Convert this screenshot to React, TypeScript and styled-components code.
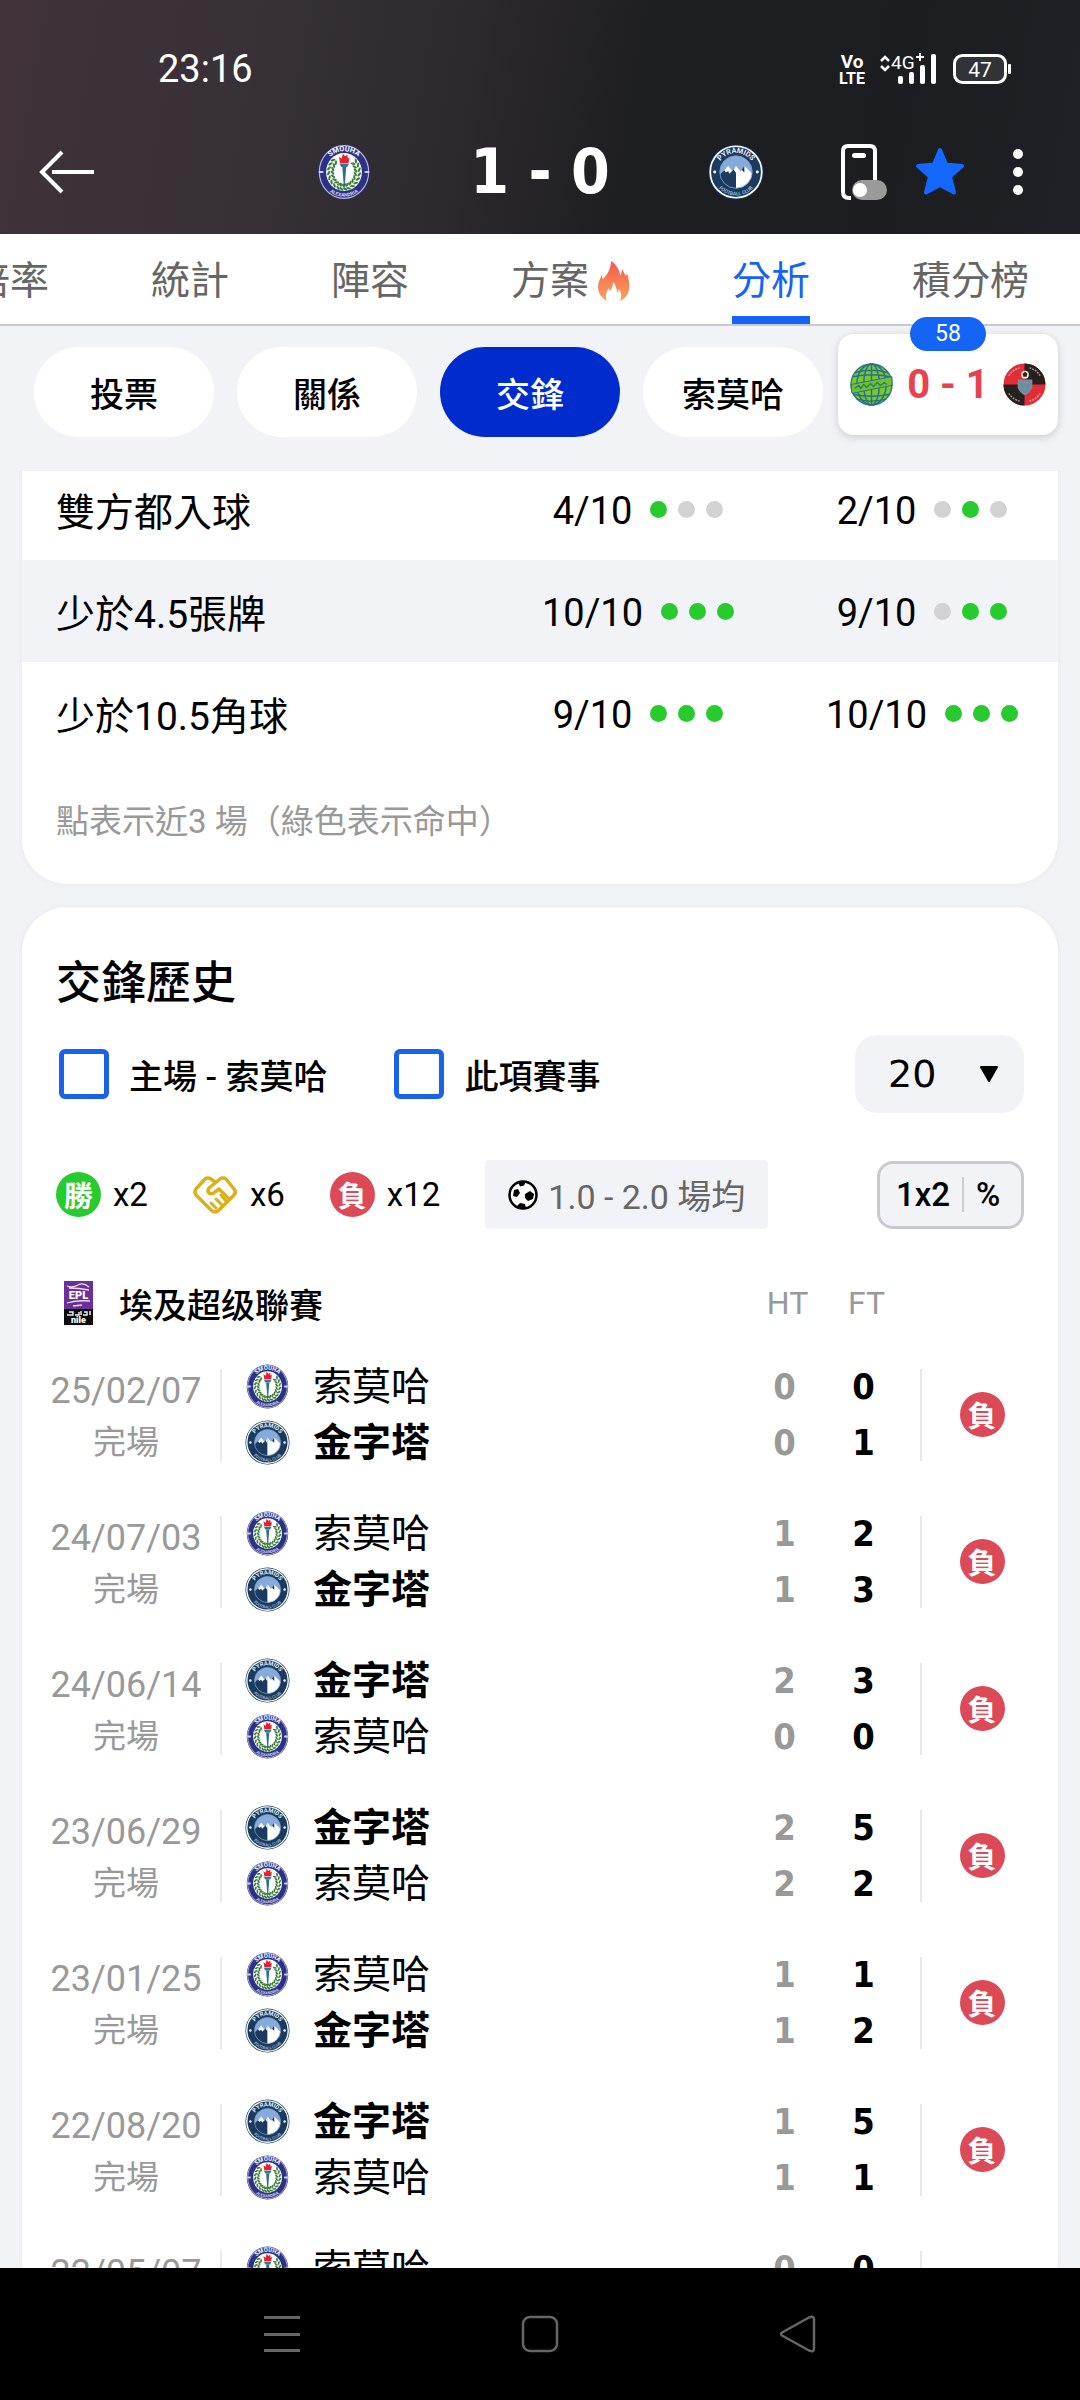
import React, { useId, useLayoutEffect, useRef } from 'react';
import styled, { createGlobalStyle } from 'styled-components';

const c = {
  page: '#f2f3f7',
  blue: '#1464f6',
  active: '#002ccd',
  green: '#28cb2d',
  gold: '#d9b11c',
  red: '#dc4957',
  muted: '#999999',
  text: '#000000',
  line: '#e8e8ea',
};

const GlobalStyle = createGlobalStyle`
  *, *::before, *::after { box-sizing: border-box; }
  body { margin: 0; background: ${c.page}; }
  button, input, select { font: inherit; color: inherit; margin: 0; }
  button { border: 0; padding: 0; background: none; cursor: pointer; }
  svg { display: block; flex: none; overflow: visible; }
`;

const Screen = styled.div`
  position: relative;
  display: flex;
  flex-direction: column;
  height: 100vh;
  overflow: hidden;
  background: ${c.page};
  color: ${c.text};
  font-family: Roboto, 'Noto Sans CJK TC', sans-serif;
`;

/* ---------- top ---------- */
const Header = styled.header`
  flex: none;
  color: #fff;
  padding-bottom: 28px;
  background: linear-gradient(100deg, #41313a 0%, #373137 24%, #2c282d 44%, #1e1f22 58%, #1c1d20 82%, #202127 100%);
`;
const StatusBar = styled.div`
  display: flex;
  align-items: center;
  justify-content: space-between;
  height: 138px;
  padding: 0 69px 0 158px;
`;
const Clock = styled.time`
  font-size: 38px;
  line-height: 48px;
`;
const StatusIcons = styled.div`
  display: flex;
  align-items: center;
  gap: 16px;
`;
const MatchBar = styled.div`
  display: grid;
  grid-template-columns: 1fr 448px 1fr;
  align-items: center;
  height: 68px;
  padding: 0 37px;
`;
const IconButton = styled.button`
  display: flex;
  align-items: center;
  justify-content: center;
  justify-self: start;
`;
const Scoreline = styled.div`
  display: flex;
  align-items: center;
  justify-content: space-between;
`;
const BigScore = styled.strong`
  font-family: 'DejaVu Sans Condensed', 'DejaVu Sans', sans-serif;
  font-size: 62px;
  line-height: 68px;
  font-weight: 700;
`;
const Actions = styled.div`
  display: flex;
  align-items: center;
  justify-content: flex-end;
  gap: 28px;
`;
const MenuButton = styled(IconButton)`
  width: 50px;
  height: 56px;
`;

/* ---------- tabs ---------- */
const Tabs = styled.nav`
  flex: none;
  display: flex;
  justify-content: flex-end;
  gap: 102px;
  height: 92px;
  padding-right: 51px;
  overflow: hidden;
  background: #fff;
  border-bottom: 2px solid #c9cacd;
`;
const Tab = styled.a<{ $active?: boolean }>`
  flex: none;
  display: flex;
  align-items: center;
  gap: 9px;
  padding-top: 12px;
  border-bottom: 8px solid ${(p) => (p.$active ? c.blue : 'transparent')};
  color: ${(p) => (p.$active ? c.blue : '#666')};
  font-size: 39px;
  line-height: 56px;
  text-decoration: none;
  white-space: nowrap;
`;
const Pills = styled.div`
  flex: none;
  display: flex;
  gap: 23px;
  padding: 21px 34px 34px;
`;
const Pill = styled.button<{ $active?: boolean }>`
  flex: none;
  width: 180px;
  height: 90px;
  border-radius: 45px;
  background: ${(p) => (p.$active ? c.active : '#fff')};
  color: ${(p) => (p.$active ? '#fff' : c.text)};
  font-size: 34px;
  font-weight: 500;
`;

/* ---------- floating live match ---------- */
const LiveCard = styled.aside`
  position: absolute;
  top: 334px;
  right: 22px;
  width: 220px;
  height: 101px;
  display: flex;
  align-items: center;
  justify-content: space-between;
  padding: 0 12px;
  border-radius: 16px;
  background: #fff;
  box-shadow: 0 2px 8px rgba(0, 0, 0, 0.16);
`;
const LiveMinute = styled.span`
  position: absolute;
  top: -17px;
  left: 72px;
  width: 76px;
  height: 34px;
  border-radius: 17px;
  background: ${c.blue};
  color: #fff;
  font-size: 23px;
  line-height: 34px;
  text-align: center;
`;
const LiveScore = styled.strong`
  color: #e8424e;
  font-size: 40px;
  line-height: 48px;
`;

/* ---------- content ---------- */
const Content = styled.main`
  flex: 1;
  min-height: 0;
  overflow-y: auto;
  scrollbar-width: none;
  padding: 0 22px;
`;
const Card = styled.section`
  background: #fff;
  border-radius: 45px;
  box-shadow: 0 0 6px rgba(0, 0, 0, 0.05);
  overflow: hidden;
  & + & {
    margin-top: 23px;
  }
`;
const StatsCard = styled(Card)`
  border-radius: 0 0 45px 45px;
`;
const StatsTable = styled.table`
  width: 100%;
  table-layout: fixed;
  border-collapse: collapse;
  tr:nth-child(even) {
    background: ${c.page};
  }
`;
const StatLabel = styled.th`
  height: 102px;
  padding: 0 0 0 34px;
  text-align: left;
  font-size: 39px;
  font-weight: 400;
`;
const StatValue = styled.td<{ $width: number }>`
  width: ${(p) => p.$width}px;
  padding: 0;
`;
const StatInner = styled.div`
  display: flex;
  align-items: center;
  justify-content: center;
  gap: 18px;
`;
const Rate = styled.span`
  padding-top: 4px;
  font-size: 38px;
  line-height: 48px;
`;
const Dots = styled.span`
  display: flex;
  gap: 11px;
`;
const Dot = styled.i<{ $hit: boolean }>`
  width: 17px;
  height: 17px;
  border-radius: 50%;
  background: ${(p) => (p.$hit ? c.green : '#d2d2d4')};
`;
const Note = styled.p`
  margin: 0;
  padding: 34px 34px 38px;
  color: ${c.muted};
  font-size: 33px;
  line-height: 48px;
`;

const Title = styled.h2`
  margin: 0;
  padding: 47px 34px 21px;
  font-size: 45px;
  line-height: 60px;
  font-weight: 500;
`;
const FilterRow = styled.div`
  display: flex;
  align-items: center;
  gap: 67px;
  height: 78px;
  margin: 0 34px 47px 37px;
  font-size: 34px;
  font-weight: 500;
`;
const Check = styled.label`
  display: flex;
  align-items: center;
  gap: 20px;
  input {
    appearance: none;
    width: 50px;
    height: 50px;
    border: 5px solid #1b62ea;
    border-radius: 6px;
    background: #fff;
  }
`;
const Picker = styled.div`
  position: relative;
  margin-left: auto;
  width: 169px;
  select {
    appearance: none;
    width: 100%;
    height: 78px;
    padding: 0 0 0 33px;
    border: 0;
    border-radius: 22px;
    background: ${c.page};
    font-family: 'DejaVu Sans', sans-serif;
    font-size: 38px;
    font-weight: 400;
  }
  svg {
    position: absolute;
    right: 25px;
    top: 30px;
    pointer-events: none;
  }
`;
const Legend = styled.div`
  display: flex;
  align-items: center;
  gap: 45px;
  height: 69px;
  margin: 0 34px 36px;
  font-size: 33px;
`;
const Tally = styled.span`
  display: flex;
  align-items: center;
  gap: 12px;
`;
const Badge = styled.span<{ $color: string }>`
  display: flex;
  align-items: center;
  justify-content: center;
  width: 45px;
  height: 45px;
  border-radius: 50%;
  background: ${(p) => p.$color};
  color: #fff;
  font-family: 'Noto Sans CJK TC', sans-serif;
  font-size: 29px;
  line-height: 45px;
  font-weight: 700;
`;
const Average = styled.span`
  display: flex;
  align-items: center;
  gap: 10px;
  height: 69px;
  padding: 0 23px;
  border-radius: 4px;
  background: ${c.page};
  color: #666;
  font-size: 34px;
  white-space: nowrap;
`;
const Toggle = styled.button`
  display: flex;
  align-items: center;
  gap: 12px;
  width: 147px;
  height: 68px;
  margin-left: auto;
  padding: 0 0 0 16px;
  border: 3px solid #c9cad0;
  border-radius: 16px;
  background: ${c.page};
  font-weight: 500;
`;
const ToggleRule = styled.i`
  width: 2px;
  height: 35px;
  background: #cdced3;
`;

const HistoryTable = styled.table`
  width: 100%;
  table-layout: fixed;
  border-collapse: collapse;
  th,
  td {
    padding: 0;
  }
`;
const Col = styled.col<{ $width?: number }>`
  width: ${(p) => (p.$width ? `${p.$width}px` : 'auto')};
`;
const League = styled.div`
  display: flex;
  align-items: center;
  gap: 26px;
  height: 76px;
  padding-left: 42px;
  font-size: 34px;
  font-weight: 500;
`;
const ScoreHead = styled.th`
  && {
    padding-left: 6px;
  }
  color: ${c.muted};
  font-size: 32px;
  font-weight: 400;
`;
const MatchRow = styled.tr`
  height: 147px;
`;
const DateBox = styled.div`
  display: flex;
  flex-direction: column;
  align-items: center;
  justify-content: center;
  height: 92px;
  padding: 4px 0 0 10px;
  border-right: 2px solid ${c.line};
  color: ${c.muted};
  font-size: 36px;
  line-height: 52px;
`;
const Finished = styled.span`
  font-size: 33px;
`;
const Teams = styled.div`
  padding-left: 23px;
`;
const Team = styled.div<{ $winner: boolean }>`
  display: flex;
  align-items: center;
  gap: 23px;
  height: 56px;
  font-size: 39px;
  line-height: 56px;
  font-weight: ${(p) => (p.$winner ? 700 : 400)};
`;
const Goals = styled.div<{ $muted?: boolean }>`
  color: ${(p) => (p.$muted ? c.muted : c.text)};
  font-family: 'DejaVu Sans Condensed', 'DejaVu Sans', sans-serif;
  font-size: 36px;
  line-height: 56px;
  font-weight: 700;
  text-align: center;
`;
const ResultBox = styled.div`
  display: flex;
  align-items: center;
  justify-content: center;
  height: 92px;
  padding-right: 16px;
  border-left: 2px solid ${c.line};
`;

/* ---------- system navigation ---------- */
const SystemNav = styled.footer`
  flex: none;
  display: flex;
  align-items: center;
  justify-content: center;
  gap: 218px;
  height: 132px;
  background: #000;
  button {
    width: 40px;
    height: 40px;
  }
`;

/* ---------- drawings ---------- */
const wreathAngles = [48, 64, 80, 96, 112, 128, 144, 160, 173];

function Wreath({ side }: { side: 1 | -1 }) {
  return (
    <g fill="#3c7f3a">
      {wreathAngles.map((a) => {
        const t = (a * Math.PI) / 180;
        const x = 50 + side * 24 * Math.sin(t);
        const y = 50 - 27 * Math.cos(t);
        return (
          <g key={a} transform={`translate(${x} ${y}) rotate(${side * a})`}>
            <ellipse cx="-1" cy="-3.500" rx="4.500" ry="2" transform="rotate(35)" />
            <ellipse cx="-1" cy="3.500" rx="4.500" ry="2" transform="rotate(-35)" />
          </g>
        );
      })}
    </g>
  );
}

function SmouhaCrest({ size }: { size: number }) {
  const id = useId();
  return (
    <svg width={size} height={size} viewBox="0 0 100 100" role="img" aria-label="索莫哈">
      <defs>
        <path id={`${id}t`} d="M13 50a37 37 0 0 1 74 0" />
        <path id={`${id}b`} d="M6 50a44 44 0 0 0 88 0" />
      </defs>
      <ellipse cx="50" cy="50" rx="46" ry="49" fill="#2b3185" />
      <ellipse cx="50" cy="50" rx="44" ry="47" fill="none" stroke="#b9bce0" strokeWidth="2" />
      <ellipse cx="50" cy="50" rx="32" ry="34" fill="#fff" />
      <text fontFamily="Roboto" fontWeight="700" fontSize="13" fill="#fff" textAnchor="middle">
        <textPath href={`#${id}t`} startOffset="50%">SMOUHA</textPath>
      </text>
      <text fontFamily="Roboto" fontWeight="700" fontSize="9" fill="#cfd1ee" textAnchor="middle">
        <textPath href={`#${id}b`} startOffset="50%">ALEXANDRIA</textPath>
      </text>
      <path d="M5 50h8M87 50h8" stroke="#cfd1ee" strokeWidth="4" />
      <Wreath side={-1} />
      <Wreath side={1} />
      <path d="M43 34l-2-11 5 3 2-9 4 5 4-3 1 7 3-2-2 10z" fill="#e2232e" />
      <path d="M42 35h17l-3 6H45z" fill="#35769b" />
      <path d="M47 41h7l-3 39h-1z" fill="#2c6f8b" />
    </svg>
  );
}

function PyramidsCrest({ size }: { size: number }) {
  const id = useId();
  return (
    <svg width={size} height={size} viewBox="0 0 100 100" role="img" aria-label="金字塔">
      <defs>
        <path id={`${id}t`} d="M16 50a34 34 0 0 1 68 0" />
        <path id={`${id}b`} d="M8 50a42 42 0 0 0 84 0" />
        <clipPath id={`${id}c`}>
          <circle cx="50" cy="50" r="29" />
        </clipPath>
      </defs>
      <circle cx="50" cy="50" r="49" fill="#1a3a60" />
      <circle cx="50" cy="50" r="46" fill="#1a3a60" stroke="#fff" strokeWidth="3" />
      <text fontFamily="Roboto" fontWeight="700" fontSize="13" fill="#e4edf8" textAnchor="middle">
        <textPath href={`#${id}t`} startOffset="50%">PYRAMIDS</textPath>
      </text>
      <text fontFamily="Roboto" fontWeight="500" fontSize="9" fill="#a9c1df" textAnchor="middle">
        <textPath href={`#${id}b`} startOffset="50%">FOOTBALL CLUB</textPath>
      </text>
      <circle cx="12" cy="50" r="2.600" fill="#fff" />
      <circle cx="88" cy="50" r="2.600" fill="#fff" />
      <g clipPath={`url(#${id}c)`}>
        <rect x="20" y="20" width="60" height="60" fill="#86aadc" />
        <path d="M18 58l18-18 7 9 7-9v42H18z" fill="#1a3a60" />
        <path d="M50 39l8 10 7-10 18 18v26H50z" fill="#fff" />
        <path d="M36 39l7 9-5 5-2-5-4 3-3-4zM50 39v13l-4-6z" fill="#fff" />
        <path d="M65 39l0 12-5-5z" fill="#1a3a60" />
      </g>
      <circle cx="50" cy="50" r="29" fill="none" stroke="#7f9cc4" strokeWidth="1.500" />
    </svg>
  );
}

function GlobeCrest() {
  return (
    <svg width="43" height="43" viewBox="0 0 44 44" role="img" aria-label="主隊">
      <circle cx="22" cy="22" r="21" fill="#7ac92c" stroke="#2c7a8a" strokeWidth="1.500" />
      <g fill="none" stroke="#2a6f90" strokeWidth="1.500">
        <ellipse cx="22" cy="22" rx="8" ry="21" />
        <ellipse cx="22" cy="22" rx="15" ry="21" />
        <path d="M22 1v42M5 10q17-5 34 0M3 14q19-4 38 0M3 32q19 4 38 0M7 37q15 4 30 0" />
      </g>
      <path d="M1 22l42-8v9L2 31z" fill="#6fc22e" stroke="#2a6f90" strokeWidth="1" />
      <path d="M5 26l4-3 2 3 3-4 3 3 4-4 3 3 4-4 3 3 4-3 3 2" fill="none" stroke="#2f7d62" strokeWidth="1.500" />
    </svg>
  );
}

function QuarteredCrest() {
  return (
    <svg width="43" height="43" viewBox="0 0 44 44" role="img" aria-label="客隊">
      <circle cx="22" cy="22" r="21.500" fill="#e32c36" />
      <path d="M22 .5A21.500 21.500 0 0 1 43.500 22H22zM22 43.500A21.500 21.500 0 0 1 .5 22H22z" fill="#26211f" />
      <g fill="none" stroke="#fff" strokeOpacity=".55" strokeWidth="1.500" strokeDasharray="2 1">
        <path d="M6 13a18 18 0 0 1 11-8M27 5a18 18 0 0 1 11 8M6 31a18 18 0 0 0 11 8M27 39a18 18 0 0 0 11-8" />
      </g>
      <path d="M15 17h15v8q-2 6-7.500 8Q17 31 15 25z" fill="#7d8a99" />
      <path d="M18 20l3 3v6zM27 20l-3 3v6z" fill="#27a0c9" />
      <circle cx="22.500" cy="12" r="4" fill="#f4e9d0" />
      <path d="M22.500 9l2.500 2-1 3h-3l-1-3z" fill="#26211f" />
    </svg>
  );
}

function LeagueLogo() {
  return (
    <svg width="29" height="44" viewBox="0 0 29 44" aria-hidden="true">
      <rect width="29" height="44" fill="#0b0b0d" />
      <rect width="29" height="28" fill="#6a2f98" />
      <path d="M3 5q6 2 11-1t11 2M5 7q10 0 20 2M3 22q10-3 23-2M9 25l9-1" fill="none" stroke="#e8def0" strokeWidth="1.300" />
      <text x="14.500" y="17.500" fontFamily="Roboto" fontSize="11" fontWeight="900" fill="#fff" textAnchor="middle">EPL</text>
      <path d="M3 34h6v-3H5M11 34h4v-3M17 34v-4M19 34h4v-3h-3M26 30v4" fill="none" stroke="#eee" strokeWidth="1.500" />
      <text x="14.500" y="42" fontFamily="Roboto" fontSize="9" fontWeight="900" fill="#fff" textAnchor="middle">nile</text>
    </svg>
  );
}

function Flame() {
  return (
    <svg width="32" height="40" viewBox="0 0 32 40" aria-hidden="true">
      <defs>
        <linearGradient id="flame" x1="0" y1="0" x2="0" y2="1">
          <stop offset="0" stopColor="#f4574f" />
          <stop offset="1" stopColor="#f9a65c" />
        </linearGradient>
      </defs>
      <path
        d="M13 0c6 4 9 10 9 15 1-2 2-4 2-7 2 3 3 6 4 7 0-1 1-2 1-3 2 7 3 12 2 17-1 6-5 9-9 11 2-5 1-9-1-12-1 2-1 3-2 4 0-5-2-9-4-11 0 4-1 6-3 9-1-1-1-2-1-3-3 4-4 8-2 13-5-3-9-7-9-14 0-5 2-8 4-12 0 2 0 3 1 4 5-5 8-11 8-18z"
        fill="url(#flame)"
      />
    </svg>
  );
}

function Handshake() {
  return (
    <svg width="45" height="38" viewBox="0 0 45 38" aria-label="和" role="img">
      <g fill="none" stroke={c.gold} strokeWidth="3.500" strokeLinecap="round" strokeLinejoin="round">
        <path d="M22 6l-4-3q-3-2-6 0L3 13q-2 3 0 6l15 15q4 4 8 0l15-15q3-3 0-6L33 3q-3-2-6 0L16 12q-2 3 0 5 3 2 6-1l4-3 10 10" />
        <path d="M18 27l5 5M23 23l6 6M28 19l5 6" strokeWidth="3" />
      </g>
    </svg>
  );
}

function Ball() {
  return (
    <svg width="30" height="30" viewBox="0 0 30 30" aria-hidden="true">
      <circle cx="15" cy="15" r="13.500" fill="#fff" stroke="#000" strokeWidth="2.500" />
      <path d="M6 10l4-1 2 4-3 4-4-1zM17 14l5-3 4 3-1 5-5 2-3-3zM10 2l8-.5-2 4-4 1zM9 26l3-3 5 1 1 4-5 1z" fill="#000" />
    </svg>
  );
}

const StatusSymbols = () => (
  <StatusIcons>
    <svg width="22" height="32" viewBox="0 0 22 32" fill="#fff" fontFamily="'Liberation Sans Narrow', Roboto" fontWeight="700" fontSize="19" textAnchor="middle">
      <text x="11" y="15">Vo</text>
      <text x="11" y="31" fontSize="16">LTE</text>
    </svg>
    <svg width="58" height="32" viewBox="0 0 58 32" fill="#fff">
      <path d="M2 8l4-4 4 4M2 13l4 4 4-4" fill="none" stroke="#fff" strokeWidth="2.500" />
      <text x="12" y="16" fontFamily="Roboto" fontSize="19">4G</text>
      <path d="M37 4h8M41 0v8" stroke="#fff" strokeWidth="2" />
      <rect x="19" y="23" width="5" height="8" rx="2" />
      <rect x="30" y="19" width="5" height="12" rx="2" />
      <rect x="41" y="12" width="5" height="19" rx="2" />
      <rect x="52" y="1" width="5" height="30" rx="2" />
    </svg>
    <svg width="58" height="32" viewBox="0 0 58 32">
      <rect x="1.500" y="2.500" width="51" height="27" rx="8" fill="#323337" stroke="#fff" strokeWidth="3" />
      <rect x="55" y="11" width="3" height="10" rx="1" fill="#fff" />
      <text x="27" y="23.500" fontFamily="Roboto" fontSize="21" fill="#fff" textAnchor="middle">47</text>
    </svg>
  </StatusIcons>
);

/* ---------- data ---------- */
type TeamKey = 'smouha' | 'pyramids';
const teams: Record<TeamKey, { name: string; Crest: React.FC<{ size: number }> }> = {
  smouha: { name: '索莫哈', Crest: SmouhaCrest },
  pyramids: { name: '金字塔', Crest: PyramidsCrest },
};

type Stat = { label: string; values: { rate: string; dots: number[] }[] };
const stats: Stat[] = [
  { label: '雙方都入球', values: [{ rate: '4/10', dots: [1, 0, 0] }, { rate: '2/10', dots: [0, 1, 0] }] },
  { label: '少於4.5張牌', values: [{ rate: '10/10', dots: [1, 1, 1] }, { rate: '9/10', dots: [0, 1, 1] }] },
  { label: '少於10.5角球', values: [{ rate: '9/10', dots: [1, 1, 1] }, { rate: '10/10', dots: [1, 1, 1] }] },
];

type Match = { date: string; sides: [TeamKey, TeamKey]; ht: [number, number]; ft: [number, number] };
const matches: Match[] = [
  { date: '25/02/07', sides: ['smouha', 'pyramids'], ht: [0, 0], ft: [0, 1] },
  { date: '24/07/03', sides: ['smouha', 'pyramids'], ht: [1, 1], ft: [2, 3] },
  { date: '24/06/14', sides: ['pyramids', 'smouha'], ht: [2, 0], ft: [3, 0] },
  { date: '23/06/29', sides: ['pyramids', 'smouha'], ht: [2, 2], ft: [5, 2] },
  { date: '23/01/25', sides: ['smouha', 'pyramids'], ht: [1, 1], ft: [1, 2] },
  { date: '22/08/20', sides: ['pyramids', 'smouha'], ht: [1, 1], ft: [5, 1] },
  { date: '22/05/07', sides: ['smouha', 'pyramids'], ht: [0, 0], ft: [0, 1] },
];

const tabs = ['倍率', '統計', '陣容', '方案', '分析', '積分榜'];
const pills = ['投票', '關係', '交鋒', '索莫哈'];

export default function App() {
  const contentRef = useRef<HTMLElement>(null);
  useLayoutEffect(() => {
    if (contentRef.current) contentRef.current.scrollTop = 13;
  }, []);

  return (
    <Screen>
      <GlobalStyle />
      <Header>
        <StatusBar>
          <Clock>23:16</Clock>
          <StatusSymbols />
        </StatusBar>
        <MatchBar>
          <IconButton aria-label="返回">
            <svg width="58" height="48" viewBox="0 0 58 48" fill="none" stroke="#fff" strokeWidth="4">
              <path d="M25 4L5 24l20 20M15 24h42" />
            </svg>
          </IconButton>
          <Scoreline>
            <SmouhaCrest size={56} />
            <BigScore>1 - 0</BigScore>
            <PyramidsCrest size={56} />
          </Scoreline>
          <Actions>
            <IconButton aria-label="懸浮窗">
              <svg width="46" height="56" viewBox="0 0 46 56">
                <path d="M34 36V7q0-5-5-5H7Q2 2 2 7v41q0 6 6 6h2" fill="none" stroke="#fff" strokeWidth="4" />
                <rect x="11" y="9" width="14" height="5" rx="2.500" fill="#fff" />
                <rect x="11" y="36" width="35" height="20" rx="10" fill="#9a9a9b" />
                <circle cx="19" cy="46" r="7" fill="#fff" />
              </svg>
            </IconButton>
            <IconButton aria-label="收藏">
              <svg width="50" height="50" viewBox="0 0 50 50">
                <path d="M25 3l6 14.500 16 1.500-12 10.500 4 16L25 38l-14 7.500 4-16L3 19l16-1.500z" fill="#1467ff" stroke="#1467ff" strokeWidth="4" strokeLinejoin="round" />
              </svg>
            </IconButton>
            <MenuButton aria-label="更多">
              <svg width="10" height="46" viewBox="0 0 10 46" fill="#fff">
                <circle cx="5" cy="5" r="5" />
                <circle cx="5" cy="23" r="5" />
                <circle cx="5" cy="41" r="5" />
              </svg>
            </MenuButton>
          </Actions>
        </MatchBar>
      </Header>

      <Tabs>
        {tabs.map((t) => (
          <Tab key={t} href="#" $active={t === '分析'}>
            {t}
            {t === '方案' && <Flame />}
          </Tab>
        ))}
      </Tabs>
      <Pills>
        {pills.map((p) => (
          <Pill key={p} $active={p === '交鋒'}>{p}</Pill>
        ))}
      </Pills>

      <Content ref={contentRef}>
        <StatsCard>
          <StatsTable>
            <tbody>
              {stats.map((s) => (
                <tr key={s.label}>
                  <StatLabel scope="row">{s.label}</StatLabel>
                  {s.values.map((v, i) => (
                    <StatValue key={i} $width={i === 0 ? 296 : 272}>
                      <StatInner>
                        <Rate>{v.rate}</Rate>
                        <Dots>
                          {v.dots.map((d, j) => (
                            <Dot key={j} $hit={d === 1} />
                          ))}
                        </Dots>
                      </StatInner>
                    </StatValue>
                  ))}
                </tr>
              ))}
            </tbody>
          </StatsTable>
          <Note>點表示近3 場（綠色表示命中）</Note>
        </StatsCard>

        <Card>
          <Title>交鋒歷史</Title>
          <FilterRow>
            <Check>
              <input type="checkbox" />
              主場 - 索莫哈
            </Check>
            <Check>
              <input type="checkbox" />
              此項賽事
            </Check>
            <Picker>
              <select aria-label="場數" defaultValue="20">
                <option>20</option>
              </select>
              <svg width="20" height="18" viewBox="0 0 20 18">
                <path d="M2 2h16l-8 14z" stroke="#000" strokeWidth="2" strokeLinejoin="round" />
              </svg>
            </Picker>
          </FilterRow>
          <Legend>
            <Tally>
              <Badge $color={c.green}>勝</Badge>x2
            </Tally>
            <Tally>
              <Handshake />x6
            </Tally>
            <Tally>
              <Badge $color={c.red}>負</Badge>x12
            </Tally>
            <Average>
              <Ball />
              1.0 - 2.0 場均
            </Average>
            <Toggle>
              1x2
              <ToggleRule />%
            </Toggle>
          </Legend>

          <HistoryTable>
            <colgroup>
              <Col $width={200} />
              <Col />
              <Col $width={79} />
              <Col $width={79} />
              <Col $width={17} />
              <Col $width={138} />
            </colgroup>
            <thead>
              <tr>
                <th colSpan={2} scope="col">
                  <League>
                    <LeagueLogo />
                    埃及超级聯賽
                  </League>
                </th>
                <ScoreHead scope="col">HT</ScoreHead>
                <ScoreHead scope="col">FT</ScoreHead>
                <td colSpan={2} />
              </tr>
            </thead>
            <tbody>
              {matches.map((m) => (
                <MatchRow key={m.date}>
                  <td>
                    <DateBox>
                      <span>{m.date}</span>
                      <Finished>完場</Finished>
                    </DateBox>
                  </td>
                  <td>
                    <Teams>
                      {m.sides.map((key, i) => {
                        const { name, Crest } = teams[key];
                        return (
                          <Team key={key} $winner={m.ft[i] > m.ft[1 - i]}>
                            <Crest size={45} />
                            {name}
                          </Team>
                        );
                      })}
                    </Teams>
                  </td>
                  <td>
                    {m.ht.map((g, i) => (
                      <Goals key={i} $muted>{g}</Goals>
                    ))}
                  </td>
                  <td>
                    {m.ft.map((g, i) => (
                      <Goals key={i}>{g}</Goals>
                    ))}
                  </td>
                  <td />
                  <td>
                    <ResultBox>
                      <Badge $color={c.red}>負</Badge>
                    </ResultBox>
                  </td>
                </MatchRow>
              ))}
            </tbody>
          </HistoryTable>
        </Card>
      </Content>

      <LiveCard>
        <LiveMinute>58</LiveMinute>
        <GlobeCrest />
        <LiveScore>0 - 1</LiveScore>
        <QuarteredCrest />
      </LiveCard>

      <SystemNav>
        <button aria-label="最近">
          <svg width="40" height="40" viewBox="0 0 40 40" stroke="#666" strokeWidth="3">
            <path d="M2 3.500h36M2 20.500h36M2 36.500h36" />
          </svg>
        </button>
        <button aria-label="主畫面">
          <svg width="40" height="40" viewBox="0 0 40 40" fill="none" stroke="#666" strokeWidth="2.500">
            <rect x="3" y="3" width="34" height="34" rx="7" />
          </svg>
        </button>
        <button aria-label="返回上頁">
          <svg width="40" height="40" viewBox="0 0 40 40" fill="none" stroke="#666" strokeWidth="2.500" strokeLinejoin="round">
            <path d="M4 18.500L31 3.500q5-2 5 2v29q0 4-5 2L4 21.500q-2-1.500 0-3z" />
          </svg>
        </button>
      </SystemNav>
    </Screen>
  );
}
